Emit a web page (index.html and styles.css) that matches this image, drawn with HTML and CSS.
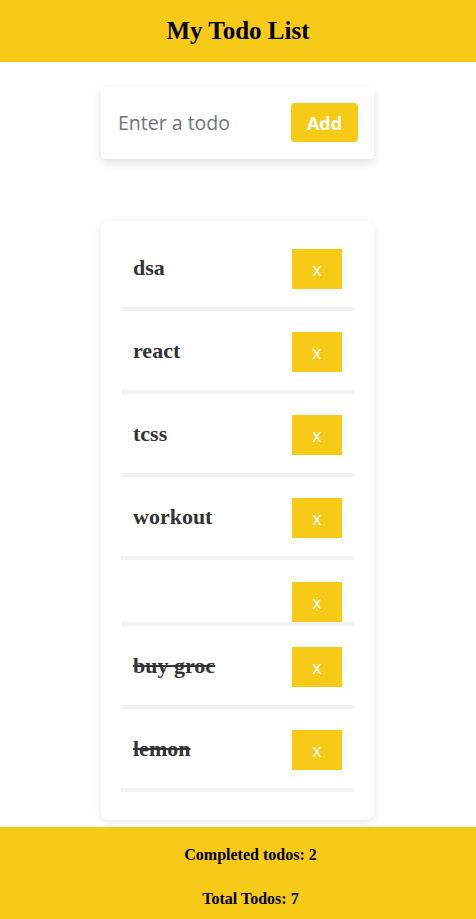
FILE: index.html
```html
<!DOCTYPE html>
<html lang="en">
<head>
<meta charset="utf-8">
<title>My Todo List</title>
<link rel="stylesheet" href="styles.css">
</head>
<body>
<header class="app-header">
  <h1 class="title">My Todo List</h1>
</header>
<main class="content">
  <form class="todo-form">
    <input class="todo-input" type="text" placeholder="Enter a todo">
    <button class="add-btn" type="button">Add</button>
  </form>
  <ul class="todo-list">
    <li class="todo-item"><span class="todo-text">dsa</span><button class="delete-btn" type="button">x</button></li>
    <li class="todo-item"><span class="todo-text">react</span><button class="delete-btn" type="button">x</button></li>
    <li class="todo-item"><span class="todo-text">tcss</span><button class="delete-btn" type="button">x</button></li>
    <li class="todo-item"><span class="todo-text">workout</span><button class="delete-btn" type="button">x</button></li>
    <li class="todo-item todo-item--empty"><span class="todo-text"></span><button class="delete-btn" type="button">x</button></li>
    <li class="todo-item"><span class="todo-text done">buy groc</span><button class="delete-btn" type="button">x</button></li>
    <li class="todo-item"><span class="todo-text done">lemon</span><button class="delete-btn" type="button">x</button></li>
  </ul>
</main>
<footer class="stats">
  <p class="stat">Completed todos: 2</p>
  <p class="stat">Total Todos: 7</p>
</footer>
</body>
</html>
```

FILE: styles.css
```css
* { box-sizing: border-box; }

body {
  margin: 0;
  background: #ffffff;
  font-family: "Liberation Serif", "Times New Roman", serif;
  color: #000;
}

.app-header {
  height: 62px;
  background: #f7ca18;
  display: flex;
  align-items: center;
  justify-content: center;
}

.title {
  margin: 0;
  font-size: 25px;
  font-weight: bold;
  line-height: normal;
}

.content {
  display: flex;
  flex-direction: column;
  align-items: center;
  padding: 25px 1px 0 0;
  gap: 62px;
}

.todo-form {
  width: 273px;
  margin: 0;
  padding: 16px 16px 17px 16px;
  display: flex;
  align-items: center;
  gap: 8px;
  background: #fff;
  border-radius: 3px;
  box-shadow: 0 4px 10px rgba(0, 0, 0, 0.13);
}

.todo-input {
  flex: 1;
  min-width: 0;
  border: none;
  outline: none;
  padding: 0 0 0 1px;
  font-family: "Open Sans", "Noto Sans", sans-serif;
  font-size: 19.5px;
  color: #333;
  background: transparent;
}

.todo-input::placeholder {
  color: #6f7378;
}

.add-btn {
  width: 67px;
  height: 39px;
  border: none;
  border-radius: 4px;
  background: #f7ca18;
  color: #fff;
  font-family: "Open Sans", "Noto Sans", sans-serif;
  font-weight: bold;
  font-size: 18px;
  padding: 0;
  cursor: pointer;
}

.todo-list {
  list-style: none;
  width: 273px;
  margin: 0;
  padding: 7px 20px 28px;
  background: #fff;
  border-radius: 8px;
  box-shadow: 0 2px 10px rgba(0, 0, 0, 0.1);
}

.todo-item {
  display: flex;
  justify-content: space-between;
  align-items: flex-start;
  padding: 21px 12px 0;
  border-bottom: 4px solid #f2f2f2;
}

.todo-item--empty {
  padding-top: 22px;
}

.todo-text {
  font-size: 22px;
  font-weight: bold;
  line-height: 24px;
  color: #333;
  margin: 7px 0 27px;
}

.todo-text.done {
  text-decoration: line-through;
}

.delete-btn {
  width: 50px;
  height: 40px;
  border: none;
  border-radius: 0;
  padding: 0;
  background: #f7ca18;
  color: #fff;
  font-family: "Open Sans", "Noto Sans", sans-serif;
  font-size: 18px;
  line-height: 1;
  cursor: pointer;
}

.stats {
  margin-top: 7px;
  background: #f7ca18;
  padding: 19px 0 20px 25px;
  display: flex;
  flex-direction: column;
  align-items: center;
  gap: 26px;
}

.stat {
  margin: 0;
  font-size: 16px;
  font-weight: bold;
  line-height: 18px;
}
```
